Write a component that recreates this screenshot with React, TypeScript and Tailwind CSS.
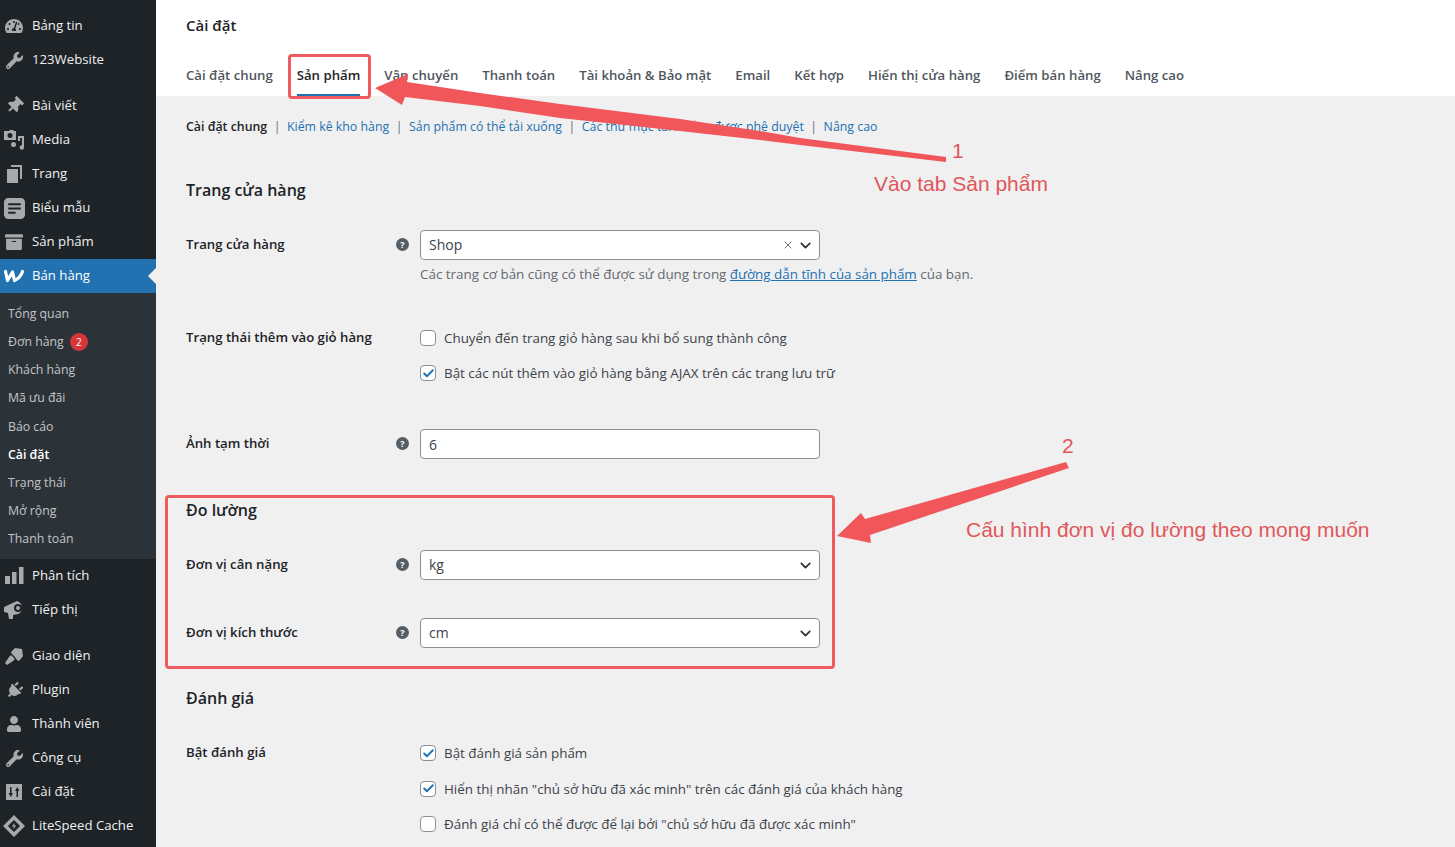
import React from 'react';
import { FaTachometerAlt, FaWrench, FaThumbtack, FaArchive, FaPlug, FaUser } from 'react-icons/fa';
import { ChevronDown, Check, X } from 'lucide-react';

const FormsIcon = () => (
  <svg width="21" height="21" viewBox="0 0 20 20" fill="currentColor">
    <path fillRule="evenodd" d="M4 0h12a4 4 0 0 1 4 4v12a4 4 0 0 1-4 4H4a4 4 0 0 1-4-4V4a4 4 0 0 1 4-4zM4 5v2h12V5H4zm0 4v2h12V9H4zm0 4v2h7v-2H4z" />
  </svg>
);

const WooIcon = () => (
  <svg width="22" height="14" viewBox="0 0 22 14" fill="none" stroke="#fff" strokeWidth="3.2" strokeLinejoin="round" strokeLinecap="round">
    <path d="M2.500 2.500 4.500 11.500 9.500 3 11.500 11.500C15 10 18 7 19.500 2.500" />
  </svg>
);

const MediaIcon = () => (
  <svg width="20" height="20" viewBox="0 0 20 20" fill="currentColor">
    <path fillRule="evenodd" d="M0 1h5l1-1h3l1 1h2v9H0zM6 3a2.500 2.500 0 1 0 0 5 2.500 2.500 0 0 0 0-5z" />
    <path d="M14 6h6v11.500a2.200 2.200 0 1 1-2-2.200V8h-2v3h-2zM12 14.500a2.500 2.500 0 1 1-5 0 2.500 2.500 0 0 1 5 0z" />
  </svg>
);

const PagesIcon = () => (
  <svg width="20" height="20" viewBox="0 0 20 20" fill="currentColor">
    <path d="M7 1h11v14h-2V3H7z" />
    <path d="M3 5h11v14H3z" />
  </svg>
);

const BarsIcon = () => (
  <svg width="20" height="20" viewBox="0 0 20 20" fill="currentColor">
    <path d="M1 10h5v8H1zM8 6h4.500v12H8zM15 1h4.500v17H15z" />
  </svg>
);

const MegaphoneIcon = () => (
  <svg width="20" height="20" viewBox="0 0 20 20" fill="currentColor">
    <path fillRule="evenodd" d="M0 7l13-6a7 7 0 0 1 1 13l-5 1v4H5l-1-6-4-1zM14 4a4 4 0 1 0 0 8 4 4 0 0 0 0-8z" />
    <circle cx="14" cy="8" r="2" />
  </svg>
);

const BrushIcon = () => (
  <svg width="20" height="20" viewBox="0 0 20 20" fill="currentColor">
    <path d="M11 2l7 1 1 7-4 5-2-1-2-3-3-3-1-2zM7 9l4 4-2 2-6 4-2-2 4-6z" />
  </svg>
);

const SettingsIcon = () => (
  <svg width="16" height="16" viewBox="0 0 16 16" fill="currentColor">
    <path fillRule="evenodd" d="M0 0h16v16H0zM4 3v6H2.500L4.800 13 7 9H5.500V3zm6.500 10V7H9l2.300-4 2.200 4H12v6z" />
  </svg>
);

const LiteSpeedIcon = () => (
  <svg width="22" height="22" viewBox="0 0 20 20" fill="currentColor">
    <path fillRule="evenodd" d="M10 0l10 10-10 10L0 10zM10 4.500 4.500 10l5.500 5.500 5.500-5.500zM10.500 7 8 10.500h1.800L9.500 13 12 9.500h-1.800z" />
  </svg>
);

type Item = { label: string; icon: React.ReactNode; active?: boolean; tall?: boolean };

const topItems: Item[] = [
  { label: 'Bảng tin', icon: <FaTachometerAlt size={18} /> },
  { label: '123Website', icon: <FaWrench size={17} /> },
];
const contentItems: Item[] = [
  { label: 'Bài viết', icon: <FaThumbtack size={17} className="rotate-45" />, tall: true },
  { label: 'Media', icon: <MediaIcon /> },
  { label: 'Trang', icon: <PagesIcon /> },
  { label: 'Biểu mẫu', icon: <FormsIcon /> },
  { label: 'Sản phẩm', icon: <FaArchive size={18} /> },
  { label: 'Bán hàng', icon: <WooIcon />, active: true },
];
const subItems = ['Tổng quan', 'Đơn hàng', 'Khách hàng', 'Mã ưu đãi', 'Báo cáo', 'Cài đặt', 'Trạng thái', 'Mở rộng', 'Thanh toán'];
const statsItems: Item[] = [
  { label: 'Phân tích', icon: <BarsIcon /> },
  { label: 'Tiếp thị', icon: <MegaphoneIcon /> },
];
const toolItems: Item[] = [
  { label: 'Giao diện', icon: <BrushIcon /> },
  { label: 'Plugin', icon: <FaPlug size={17} className="rotate-45" /> },
  { label: 'Thành viên', icon: <FaUser size={16} /> },
  { label: 'Công cụ', icon: <FaWrench size={17} /> },
  { label: 'Cài đặt', icon: <SettingsIcon /> },
  { label: 'LiteSpeed Cache', icon: <LiteSpeedIcon /> },
];

const tabs = ['Cài đặt chung', 'Sản phẩm', 'Vận chuyển', 'Thanh toán', 'Tài khoản & Bảo mật', 'Email', 'Kết hợp', 'Hiển thị cửa hàng', 'Điểm bán hàng', 'Nâng cao'];
const subLinks = ['Kiểm kê kho hàng', 'Sản phẩm có thể tải xuống', 'Các thư mục tải xuống được phê duyệt', 'Nâng cao'];

const MenuRow = ({ item }: { item: Item }) => (
  <div className={`relative flex items-center text-[13.200px] ${item.tall ? 'h-[35px]' : 'h-[34px]'} ${item.active ? 'bg-[#2271b1] text-white' : 'text-[#f0f0f1]'}`}>
    <div className={`mr-1 flex w-[28px] shrink-0 justify-center ${item.active ? 'text-white' : 'text-[#a7aaad]'}`}>{item.icon}</div>
    <span>{item.label}</span>
    {item.active && (
      <div className="absolute right-0 top-[9px] h-0 w-0 border-y-[8px] border-r-[8px] border-y-transparent border-r-[#f0f0f1]" />
    )}
  </div>
);

const Sidebar = () => (
  <aside className="flex h-[847px] w-[156px] shrink-0 flex-col bg-[#1d2327] pt-[9px]">
    {topItems.map((i) => <MenuRow key={i.label} item={i} />)}
    <div className="h-[11px]" />
    {contentItems.map((i) => <MenuRow key={i.label} item={i} />)}
    <div className="flex h-[266px] flex-col bg-[#2c3338] pt-[7px]">
      {subItems.map((s) => (
        <div key={s} className={`flex h-[28.200px] items-center pl-2 text-[12.300px] ${s === 'Cài đặt' ? 'font-semibold text-white' : 'text-[#c3c4c7]'}`}>
          {s}
          {s === 'Đơn hàng' && (
            <span className="ml-[6px] flex h-[18px] w-[18px] items-center justify-center rounded-full bg-[#d63638] text-[10px] text-white">2</span>
          )}
        </div>
      ))}
    </div>
    {statsItems.map((i) => <MenuRow key={i.label} item={i} />)}
    <div className="h-3" />
    {toolItems.map((i) => <MenuRow key={i.label} item={i} />)}
  </aside>
);

const Help = () => (
  <span className="flex h-[13px] w-[13px] items-center justify-center rounded-full bg-[#555d66] text-[9px] font-bold leading-none text-white">?</span>
);

const Select = ({ value, clear }: { value: string; clear?: boolean }) => (
  <div className="flex h-[30px] w-[400px] items-center rounded-[4px] border border-[#8c8f94] bg-white pl-2 pr-[5px] text-[14px] text-[#3c434a]">
    <span className="flex-1 pb-[2px]">{value}</span>
    {clear && <X size={12} className="mr-[3px] text-[#777]" />}
    <ChevronDown size={17} strokeWidth={2.400} className="text-[#2c3338]" />
  </div>
);

const CheckRow = ({ label, checked }: { label: string; checked?: boolean }) => (
  <div className="flex items-center gap-2 text-[13.400px] text-[#3c434a]">
    <span className="flex h-4 w-4 items-center justify-center rounded-[4px] border border-[#8c8f94] bg-white">
      {checked && <Check size={13} strokeWidth={3.500} className="text-[#2271b1]" />}
    </span>
    {label}
  </div>
);

const Row = ({ label, help = true, className, children }: { label: string; help?: boolean; className?: string; children: React.ReactNode }) => (
  <div className={`flex ${className ?? ''}`}>
    <div className="w-[210px] shrink-0 pb-[2px] text-[13.200px] font-semibold leading-[28px] text-[#1d2327]">{label}</div>
    <div className="flex h-[28px] w-[24px] shrink-0 items-center">{help && <Help />}</div>
    <div>{children}</div>
  </div>
);

const Heading = ({ text, className }: { text: string; className?: string }) => (
  <h2 className={`text-[16px] font-semibold leading-6 text-[#1d2327] ${className ?? ''}`}>{text}</h2>
);

const Annotations = () => (
  <>
    <svg className="pointer-events-none absolute left-0 top-0" width="1455" height="847">
      <path d="M375 88 408 74 407 82 480 93 560 104 680 119 760 131 800 138 946 157 946 162 800 145 760 140 680 131 560 118 480 106 405 97 402 105Z" fill="#f0565a" />
      <path d="M837 536 861 513 865 519 1066 462 1069 468 870 535 871 543Z" fill="#f0565a" />
    </svg>
    <div className="pointer-events-none absolute left-[288px] top-[54px] h-[45px] w-[83px] rounded-[4px] border-[3px] border-[#ef5a5e]" />
    <div className="pointer-events-none absolute left-[165px] top-[495px] h-[174px] w-[670px] rounded-[4px] border-[3px] border-[#ef5a5e]" />
    <div className="absolute left-[952px] top-[139px] font-['Liberation_Sans',sans-serif] text-[21px] leading-6 text-[#e0575a]">1</div>
    <div className="absolute left-[874px] top-[172px] font-['Liberation_Sans',sans-serif] text-[21px] leading-6 text-[#e0575a]">Vào tab Sản phẩm</div>
    <div className="absolute left-[1062px] top-[434px] font-['Liberation_Sans',sans-serif] text-[21px] leading-6 text-[#e0575a]">2</div>
    <div className="absolute left-[966px] top-[518px] font-['Liberation_Sans',sans-serif] text-[21px] leading-6 text-[#e0575a]">Cấu hình đơn vị đo lường theo mong muốn</div>
  </>
);

export default function App() {
  return (
    <div className="relative flex h-[847px] overflow-hidden bg-[#f0f0f1] font-['Open_Sans',sans-serif]">
      <Sidebar />
      <main className="flex-1">
        <header className="h-[96px] bg-white pl-[30px]">
          <div className="pt-[15px] text-[15px] font-semibold leading-5 text-[#1d2327]">Cài đặt</div>
          <nav className="mt-[17px] flex gap-6">
            {tabs.map((t) => (
              <div key={t} className={`h-[44px] pt-[13px] text-[13.200px] font-semibold leading-5 ${t === 'Sản phẩm' ? 'border-b-2 border-[#2271b1] text-[#1d2327]' : 'text-[#50575e]'}`}>{t}</div>
            ))}
          </nav>
        </header>
        <div className="pl-[30px]">
          <div className="flex items-center pt-[21px] text-[12.350px] leading-5 text-[#2271b1]">
            <span className="font-semibold text-[#1d2327]">Cài đặt chung</span>
            {subLinks.map((l) => (
              <span key={l}><span className="mx-[6.500px] text-[#646970]">|</span>{l}</span>
            ))}
          </div>
          <Heading text="Trang cửa hàng" className="mt-[41px]" />
          <Row label="Trang cửa hàng" className="mt-[28px]">
            <Select value="Shop" clear />
            <p className="mt-[4px] text-[13.400px] leading-5 text-[#646970]">
              Các trang cơ bản cũng có thể được sử dụng trong <a className="text-[#2271b1] underline">đường dẫn tĩnh của sản phẩm</a> của bạn.
            </p>
          </Row>
          <Row label="Trạng thái thêm vào giỏ hàng" help={false} className="mt-[39px]">
            <div className="flex flex-col gap-[15px] pt-[5px]">
              <CheckRow label="Chuyển đến trang giỏ hàng sau khi bổ sung thành công" />
              <CheckRow label="Bật các nút thêm vào giỏ hàng bằng AJAX trên các trang lưu trữ" checked />
            </div>
          </Row>
          <Row label="Ảnh tạm thời" className="mt-[46px]">
            <div className="flex h-[30px] w-[400px] items-center rounded-[4px] border border-[#8c8f94] bg-white pl-2 text-[14px] text-[#3c434a]">6</div>
          </Row>
          <Heading text="Đo lường" className="mt-[39px]" />
          <Row label="Đơn vị cân nặng" className="mt-[28px]">
            <Select value="kg" />
          </Row>
          <Row label="Đơn vị kích thước" className="mt-[38px]">
            <Select value="cm" />
          </Row>
          <Heading text="Đánh giá" className="mt-[38px]" />
          <Row label="Bật đánh giá" help={false} className="mt-[28px]">
            <div className="flex flex-col gap-[15.500px] pt-[5px]">
              <CheckRow label="Bật đánh giá sản phẩm" checked />
              <CheckRow label='Hiển thị nhãn "chủ sở hữu đã xác minh" trên các đánh giá của khách hàng' checked />
              <CheckRow label='Đánh giá chỉ có thể được để lại bởi "chủ sở hữu đã được xác minh"' />
            </div>
          </Row>
        </div>
      </main>
      <Annotations />
    </div>
  );
}
